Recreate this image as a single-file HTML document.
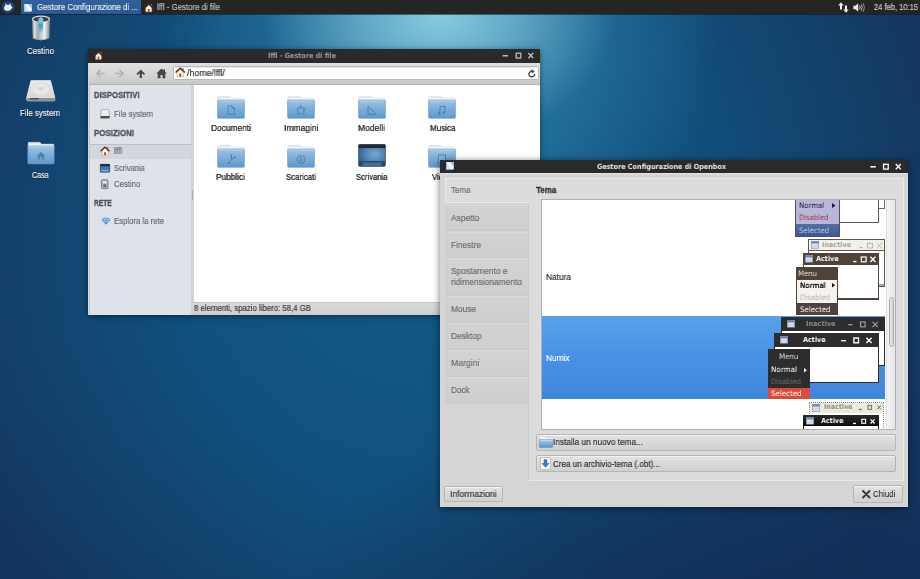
<!DOCTYPE html>
<html lang="it">
<head>
<meta charset="utf-8">
<title>Desktop</title>
<style>
*{box-sizing:border-box;margin:0;padding:0}
html,body{width:920px;height:579px;overflow:hidden}
body{position:relative;font-family:"Liberation Sans","DejaVu Sans",sans-serif;font-size:9px;color:#333;background:#123c66}
.a{position:absolute}
.t{position:absolute;white-space:nowrap;line-height:1;transform-origin:0 0;display:block;will-change:transform}
svg{position:absolute;overflow:visible}
</style>
</head>
<body>
<div class="a" id="wall" style="left:0;top:0;width:920px;height:579px;background:
radial-gradient(ellipse 175px 130px at 440px 14px, rgba(140,205,225,.95) 0%, rgba(140,205,225,0) 100%),
radial-gradient(ellipse 280px 270px at 440px 26px, rgba(60,150,190,.8) 0%, rgba(60,150,190,0) 100%),
radial-gradient(ellipse 460px 300px at 740px 660px, rgba(17,46,86,.95) 0%, rgba(17,46,86,.6) 50%, rgba(17,46,86,0) 100%),
radial-gradient(ellipse 520px 600px at 430px 200px, rgba(16,92,138,1) 0%, rgba(16,90,136,.72) 50%, rgba(16,80,128,0) 100%),
linear-gradient(180deg,#14355d 0%,#143862 60%,#13345e 100%);"></div>
<div class="a" style="left:0px;top:0px;width:920px;height:14px;background:#252525;"></div>
<div class="a" style="left:0px;top:14px;width:920px;height:1px;background:rgba(10,20,35,.55);"></div>
<svg style="left:1.6px;top:1.3px" width="12" height="12" viewBox="0 0 12 12" ><circle cx="6" cy="6" r="5.800" fill="#1a4590"/><circle cx="6" cy="6" r="5.800" fill="none" stroke="#2a5db0" stroke-width=".5" opacity=".6"/>
<path d="M2.200 8.600 Q1.700 5.600 3.400 4.600 L3.600 2.600 L5 4 Q6 3.700 6.800 4 L8.600 2.400 L8.800 4.400 L10.600 6.600 Q9.600 7.200 9 8.200 Q7.600 9.900 4.600 9.700 Q2.800 9.500 2.200 8.600 Z" fill="#f3f7fc"/>
<path d="M8.600 2.400 L8.800 4.400 L7.600 3.600 Z M3.600 2.600 L5 4 L3.500 4.400 Z" fill="#a9cdf5"/></svg>
<div class="a" style="left:21px;top:0px;width:120px;height:14px;background:linear-gradient(180deg,#30619b 0%,#2a5a92 100%);"></div>
<svg style="left:24px;top:3.7px" width="8.2" height="7.5" viewBox="0 0 9 9" ><rect x=".3" y=".3" width="8.400" height="8.400" fill="#c4e4fa" stroke="#e4f1fb" stroke-width=".6"/><path d="M.6 .6 H5 L8.400 5 V8.400 H5 Z" fill="#f2f9ff" opacity=".9"/><path d="M8.400 .6 H5.200 L8.400 4.400 Z" fill="#7db7d6"/></svg>
<span class="t" style="left:37.00px;top:3px;font-size:9px;color:#ececec;transform:scaleX(0.8817);-webkit-text-stroke:.18px;">Gestore Configurazione di ...</span>
<svg style="left:144px;top:2.5px" width="9.5" height="9.5" viewBox="0 0 16 16" ><path d="M3 7.600 V14.800 H13 V7.600 L8 3.200 Z" fill="#fdeedd" stroke="#e39a6c" stroke-width="1"/>
<rect x="6.700" y="10" width="2.600" height="4.600" fill="#7a4a2c"/>
<path d="M.9 8.400 L8 1.800 L15.100 8.400" fill="none" stroke="#4a2a1e" stroke-width="2" stroke-linejoin="miter"/>
<rect x="11.300" y="1.600" width="1.800" height="3.200" fill="#b5532f"/></svg>
<span class="t" style="left:157.00px;top:3px;font-size:9px;color:#bdbdbd;transform:scaleX(0.8707);-webkit-text-stroke:.18px;">lffl - Gestore di file</span>
<svg style="left:838px;top:2px" width="11" height="11" viewBox="0 0 11 11" ><path d="M3 .3 L5.800 3.600 H4 V7.600 H2 V3.600 H.2 Z" fill="#f2f2f2"/><path d="M8 10.700 L10.800 7.400 H9 V3.400 H7 V7.400 H5.200 Z" fill="#f2f2f2"/></svg>
<svg style="left:853px;top:2px" width="13" height="11" viewBox="0 0 13 11" ><path d="M.3 3.800 H2.400 L5.200 1.200 V9.800 L2.400 7.200 H.3 Z" fill="#e8e8e8"/>
<path d="M6.600 3.600 Q7.600 5.500 6.600 7.400" stroke="#e0e0e0" stroke-width="1" fill="none"/>
<path d="M8.300 2.300 Q10 5.500 8.300 8.700" stroke="#bdbdbd" stroke-width="1" fill="none"/>
<path d="M10.200 1.200 Q12.600 5.500 10.200 9.800" stroke="#8f8f8f" stroke-width="1" fill="none"/></svg>
<span class="t" style="left:874.00px;top:3px;font-size:9px;color:#c9c9c9;transform:scaleX(0.8375);-webkit-text-stroke:.18px;">24 feb, 10:15</span>
<svg style="left:30.5px;top:15px" width="20" height="26.5" viewBox="0 0 20 27" ><defs><linearGradient id="g1" x1="0" y1="0" x2="1" y2="0"><stop offset="0" stop-color="#70767c"/><stop offset=".14" stop-color="#d9dde0"/><stop offset=".32" stop-color="#a4a9ae"/><stop offset=".48" stop-color="#c3c7cb"/><stop offset=".7" stop-color="#f0f2f3"/><stop offset=".86" stop-color="#b1b6bb"/><stop offset="1" stop-color="#777d83"/></linearGradient>
<linearGradient id="g2" x1="0" y1="0" x2="0" y2="1"><stop offset="0" stop-color="#8fd0ea"/><stop offset=".4" stop-color="#3f9cc8"/><stop offset="1" stop-color="#3a86b0" stop-opacity=".25"/></linearGradient></defs>
<path d="M.8 4 L1.500 23.600 Q10 28 18.500 23.600 L19.200 4 Z" fill="url(#g1)"/>
<path d="M1.500 23 Q10 27.400 18.500 23" fill="none" stroke="#8c9197" stroke-width=".8" opacity=".7"/>
<ellipse cx="10" cy="4" rx="9.200" ry="3.400" fill="#d3d7da"/>
<ellipse cx="10" cy="4.300" rx="7.800" ry="2.500" fill="#3b4046"/>
<path d="M7.400 5.600 L7.800 17 L11.800 17 L12.200 5.600 Q10 6.800 7.400 5.600 Z" fill="url(#g2)"/>
<path d="M7.200 4 L9.800 1.900 L12.300 3.800 L12.200 6.200 Q10 7 7.400 6.200 Z" fill="#7cc4e4"/></svg>
<span class="t" style="left:27.00px;top:47px;font-size:9px;color:#f2f2f2;transform:scaleX(0.8848);-webkit-text-stroke:.18px;text-shadow:0 1px 1px rgba(0,0,0,.55);">Cestino</span>
<svg style="left:26px;top:80.4px" width="29.5" height="21.5" viewBox="0 0 30 22" ><defs><linearGradient id="g3" x1="0" y1="0" x2="0" y2="1"><stop offset="0" stop-color="#e9ebeb"/><stop offset="1" stop-color="#cfd2d3"/></linearGradient></defs>
<path d="M5 .6 H25 L29.400 18 V20 Q29.400 21.400 28 21.400 H2 Q.6 21.400 .6 20 V18 Z" fill="url(#g3)" stroke="#f1f2f2" stroke-width=".7"/>
<path d="M.6 18 H29.400 V20 Q29.400 21.400 28 21.400 H2 Q.6 21.400 .6 20 Z" fill="#8d9195"/>
<path d="M4 19.200 H13" stroke="#2e3236" stroke-width="1"/>
<path d="M.8 17.800 H29.200" stroke="#f7f8f8" stroke-width=".7"/>
<ellipse cx="15" cy="9.400" rx="9.400" ry="6.600" fill="#e8e6e6" stroke="#d2d3d4" stroke-width=".6"/>
<ellipse cx="15" cy="9" rx="2.600" ry="1.500" fill="#dccfd4"/></svg>
<span class="t" style="left:20.30px;top:109px;font-size:9px;color:#f2f2f2;transform:scaleX(0.8791);-webkit-text-stroke:.18px;text-shadow:0 1px 1px rgba(0,0,0,.55);">File system</span>
<svg style="left:26.5px;top:142px" width="28" height="22.5" viewBox="0 0 28 23" ><defs><linearGradient id="g4" x1="0" y1="0" x2="0" y2="1"><stop offset="0" stop-color="#9fc4e4"/><stop offset=".45" stop-color="#7fafd9"/><stop offset="1" stop-color="#5f98cb"/></linearGradient></defs>
<path d="M.8 1.300 Q.8 .3 1.800 .3 L12.400 .3 Q13.300 .3 13.700 1 L14.400 2.200 L26.400 2.200 Q27.200 2.200 27.200 3 L27.200 6 L.8 6 Z" fill="#e6ebf0" stroke="#cdd5de" stroke-width=".5"/>
<rect x="1.400" y="2.600" width="25.200" height="2" fill="#f7f9fb"/>
<rect x=".5" y="4.100" width="27" height="18.400" rx="1" fill="url(#g4)" stroke="#5a8fc3" stroke-width=".6"/>
<rect x="1" y="4.600" width="26" height=".9" fill="#c3dbf0" opacity=".85"/>
<path d="M14 10.2 l-4.6 4 h1.4 v3.6 h2.2 v-2.4 h2 v2.4 h2.2 v-3.6 h1.4 z" fill="#4e82b6"/></svg>
<span class="t" style="left:32.05px;top:171px;font-size:9px;color:#f2f2f2;transform:scaleX(0.7854);-webkit-text-stroke:.18px;text-shadow:0 1px 1px rgba(0,0,0,.55);">Casa</span>
<div class="a" style="left:88px;top:49px;width:452px;height:265.7px;background:#d6d6d6;box-shadow:0 1px 6px rgba(0,0,0,.5);"></div>
<div class="a" style="left:88px;top:49px;width:452px;height:13.5px;background:#2a2a2a;"></div>
<svg style="left:93.5px;top:51px" width="9" height="9" viewBox="0 0 16 16" ><path d="M3 7.600 V14.800 H13 V7.600 L8 3.200 Z" fill="#fdeedd" stroke="#e39a6c" stroke-width="1"/>
<rect x="6.700" y="10" width="2.600" height="4.600" fill="#7a4a2c"/>
<path d="M.9 8.400 L8 1.800 L15.100 8.400" fill="none" stroke="#4a2a1e" stroke-width="2" stroke-linejoin="miter"/>
<rect x="11.300" y="1.600" width="1.800" height="3.200" fill="#b5532f"/></svg>
<span class="t" style="left:267.80px;top:52px;font-size:7.2px;color:#9a9a9a;transform:scaleX(0.9006);font-weight:bold;font-family:'DejaVu Sans','Liberation Sans',sans-serif;">lffl - Gestore di file</span>
<svg style="left:502px;top:52px" width="32" height="8" viewBox="0 0 32 8" ><rect x=".6" y="3" width="5.400" height="1.500" fill="#bdbdbd"/>
<rect x="14.200" y="1.200" width="4.600" height="4.800" fill="none" stroke="#bdbdbd" stroke-width="1.300"/>
<path d="M26.400 1 L31.200 6.200 M31.200 1 L26.400 6.200" stroke="#bdbdbd" stroke-width="1.400"/></svg>
<div class="a" style="left:89px;top:62.5px;width:451px;height:22.5px;background:linear-gradient(180deg,#e0e0e0 0%,#d6d6d6 55%,#c6c6c6 100%);"></div>
<div class="a" style="left:89px;top:84px;width:451px;height:1px;background:#b4b4b4;"></div>
<svg style="left:95.5px;top:69px" width="9" height="9" viewBox="0 0 9 9" ><path d="M4.600 .8 L.9 4.500 L4.600 8.200 M1.200 4.500 H8.600" fill="none" stroke="#b4b4b4" stroke-width="1.700"/></svg>
<svg style="left:115px;top:69px" width="9" height="9" viewBox="0 0 9 9" ><path d="M4.400 .8 L8.100 4.500 L4.400 8.200 M7.800 4.500 H.4" fill="none" stroke="#b4b4b4" stroke-width="1.700"/></svg>
<svg style="left:135.8px;top:69px" width="9.6" height="9.5" viewBox="0 0 10 10" ><path d="M.3 5.200 L5 .4 L9.700 5.200 L8.300 6.400 L6.200 4.400 V9.600 H3.800 V4.400 L1.700 6.400 Z" fill="#4a4a4a"/></svg>
<svg style="left:155.5px;top:68px" width="11" height="10.5" viewBox="0 0 11 10.5" ><path d="M5.500 .4 L.2 5.400 H1.700 V10.200 H4.500 V7 H6.500 V10.200 H9.300 V5.400 H10.800 L9 3.700 V1.200 H7.600 V2.400 Z" fill="#474747"/></svg>
<div class="a" style="left:172.5px;top:65.5px;width:366px;height:14.5px;background:#ffffff;border:1px solid #b9b9b9;border-radius:1.5px;box-shadow:inset 0 1px 1px rgba(0,0,0,.10);"></div>
<svg style="left:174.5px;top:67.2px" width="10.5" height="10.5" viewBox="0 0 16 16" ><path d="M3 7.600 V14.800 H13 V7.600 L8 3.200 Z" fill="#fdeedd" stroke="#e39a6c" stroke-width="1"/>
<rect x="6.700" y="10" width="2.600" height="4.600" fill="#7a4a2c"/>
<path d="M.9 8.400 L8 1.800 L15.100 8.400" fill="none" stroke="#4a2a1e" stroke-width="2" stroke-linejoin="miter"/>
<rect x="11.300" y="1.600" width="1.800" height="3.200" fill="#b5532f"/></svg>
<span class="t" style="left:187.00px;top:69px;font-size:9px;color:#2e2e2e;transform:scaleX(0.9781);-webkit-text-stroke:.18px;">/home/lffl/</span>
<svg style="left:527.5px;top:68.5px" width="8" height="9" viewBox="0 0 8 9" ><path d="M6.700 5 A2.900 2.900 0 1 1 4 2.200" fill="none" stroke="#454545" stroke-width="1.400"/><path d="M3.600 .2 L6.600 2.300 L3.600 4.400 Z" fill="#454545"/></svg>
<div class="a" style="left:89px;top:85px;width:101.5px;height:229.7px;background:#dee2e9;"></div>
<div class="a" style="left:89px;top:85px;width:1px;height:229.5px;background:#c3c8d0;"></div>
<div class="a" style="left:190.5px;top:85px;width:3.2px;height:216.5px;background:#d0d3d8;"></div>
<div class="a" style="left:191.5px;top:190px;width:1px;height:10px;background:#a9acb2;"></div>
<div class="a" style="left:90px;top:143.5px;width:100.5px;height:15px;background:#d2d6de;"></div>
<div class="a" style="left:90px;top:143.5px;width:100.5px;height:1px;background:#b9bec8;"></div>
<span class="t" style="left:94.00px;top:91px;font-size:9px;color:#4d5158;transform:scaleX(0.8583);font-weight:bold;-webkit-text-stroke:.3px;">DISPOSITIVI</span>
<span class="t" style="left:94.00px;top:129px;font-size:9px;color:#4d5158;transform:scaleX(0.8790);font-weight:bold;-webkit-text-stroke:.3px;">POSIZIONI</span>
<span class="t" style="left:94.00px;top:199px;font-size:9px;color:#4d5158;transform:scaleX(0.7374);font-weight:bold;-webkit-text-stroke:.3px;">RETE</span>
<span class="t" style="left:113.70px;top:110px;font-size:9px;color:#666a71;transform:scaleX(0.8571);-webkit-text-stroke:.18px;">File system</span>
<span class="t" style="left:113.70px;top:147px;font-size:9px;color:#666a71;transform:scaleX(0.9279);-webkit-text-stroke:.18px;">lffl</span>
<span class="t" style="left:113.70px;top:164px;font-size:9px;color:#666a71;transform:scaleX(0.8240);-webkit-text-stroke:.18px;">Scrivania</span>
<span class="t" style="left:113.70px;top:180px;font-size:9px;color:#666a71;transform:scaleX(0.8619);-webkit-text-stroke:.18px;">Cestino</span>
<span class="t" style="left:113.70px;top:217px;font-size:9px;color:#666a71;transform:scaleX(0.8617);-webkit-text-stroke:.18px;">Esplora la rete</span>
<svg style="left:100px;top:109px" width="10" height="10" viewBox="0 0 10 10" ><path d="M1.500 .6 H8.500 L9.600 7 V8.600 Q9.600 9.400 8.800 9.400 H1.200 Q.4 9.400 .4 8.600 V7 Z" fill="#eeeeee" stroke="#8f9396" stroke-width=".6"/><path d="M.5 7 H9.500 V8.700 Q9.500 9.300 8.900 9.300 H1.100 Q.5 9.300 .5 8.700 Z" fill="#4c4f52"/></svg>
<svg style="left:100px;top:146.2px" width="10" height="10" viewBox="0 0 16 16" ><path d="M3 7.600 V14.800 H13 V7.600 L8 3.200 Z" fill="#fdeedd" stroke="#e39a6c" stroke-width="1"/>
<rect x="6.700" y="10" width="2.600" height="4.600" fill="#7a4a2c"/>
<path d="M.9 8.400 L8 1.800 L15.100 8.400" fill="none" stroke="#4a2a1e" stroke-width="2" stroke-linejoin="miter"/>
<rect x="11.300" y="1.600" width="1.800" height="3.200" fill="#b5532f"/></svg>
<svg style="left:100px;top:163.5px" width="10" height="8.5" viewBox="0 0 10 8.500" ><rect x=".3" y=".3" width="9.400" height="7.900" rx=".6" fill="#3e78b4" stroke="#1e2c3c" stroke-width=".6"/><rect x=".3" y=".3" width="9.400" height="1.900" fill="#1c2530"/><rect x="1.500" y="5.800" width="7" height="1.700" fill="#7aa6d2"/></svg>
<svg style="left:101.3px;top:179px" width="7.4" height="10" viewBox="0 0 7.400 10" ><rect x=".4" y=".8" width="6.600" height="8.800" rx=".8" fill="#a9aeb3" stroke="#63686e" stroke-width=".7"/><rect x="1.700" y="2.200" width="4" height="2.200" fill="#e8ebee"/><rect x="2.400" y="5.400" width="2.600" height="2.400" fill="#5d6369"/></svg>
<svg style="left:100.5px;top:217px" width="10" height="8" viewBox="0 0 10 8" ><path d="M5 7.800 L.2 2.700 Q5 -1.800 9.800 2.700 Z" fill="#4f9ad6"/><path d="M1.500 3.200 Q5 .2 8.500 3.200 M2.900 4.700 Q5 3 7.100 4.700" stroke="#cfe6f7" stroke-width=".8" fill="none"/></svg>
<div class="a" style="left:193.7px;top:85px;width:346.3px;height:216.5px;background:#ffffff;"></div>
<div class="a" style="left:190.5px;top:301.5px;width:349.5px;height:13.2px;background:linear-gradient(180deg,#d9d9d9,#cfcfcf);"></div>
<div class="a" style="left:190.5px;top:301.5px;width:349.5px;height:1px;background:#c6c6c6;"></div>
<span class="t" style="left:194.30px;top:304px;font-size:9px;color:#3b3b3b;transform:scaleX(0.8662);-webkit-text-stroke:.18px;">8 elementi, spazio libero: 58,4 GB</span>
<svg style="left:216.5px;top:95.8px" width="28" height="22.8" viewBox="0 0 28 23" ><defs><linearGradient id="g5" x1="0" y1="0" x2="0" y2="1"><stop offset="0" stop-color="#9fc4e4"/><stop offset=".45" stop-color="#7fafd9"/><stop offset="1" stop-color="#5f98cb"/></linearGradient></defs>
<path d="M.8 1.300 Q.8 .3 1.800 .3 L12.400 .3 Q13.300 .3 13.700 1 L14.400 2.200 L26.400 2.200 Q27.200 2.200 27.200 3 L27.200 6 L.8 6 Z" fill="#e6ebf0" stroke="#cdd5de" stroke-width=".5"/>
<rect x="1.400" y="2.600" width="25.200" height="2" fill="#f7f9fb"/>
<rect x=".5" y="4.100" width="27" height="18.400" rx="1" fill="url(#g5)" stroke="#5a8fc3" stroke-width=".6"/>
<rect x="1" y="4.600" width="26" height=".9" fill="#c3dbf0" opacity=".85"/>
<path d="M11 10 h4 l2.5 2.5 v6 h-6.5 z M15 10 v2.5 h2.5" fill="none" stroke="#4a7fb5" stroke-width=".9"/></svg>
<span class="t" style="left:210.50px;top:124px;font-size:9px;color:#2f2f2f;transform:scaleX(0.9299);-webkit-text-stroke:.18px;text-shadow:0 0 .4px rgba(0,0,0,.6);">Documenti</span>
<svg style="left:287.2px;top:95.8px" width="28" height="22.8" viewBox="0 0 28 23" ><defs><linearGradient id="g6" x1="0" y1="0" x2="0" y2="1"><stop offset="0" stop-color="#9fc4e4"/><stop offset=".45" stop-color="#7fafd9"/><stop offset="1" stop-color="#5f98cb"/></linearGradient></defs>
<path d="M.8 1.300 Q.8 .3 1.800 .3 L12.400 .3 Q13.300 .3 13.700 1 L14.400 2.200 L26.400 2.200 Q27.200 2.200 27.200 3 L27.200 6 L.8 6 Z" fill="#e6ebf0" stroke="#cdd5de" stroke-width=".5"/>
<rect x="1.400" y="2.600" width="25.200" height="2" fill="#f7f9fb"/>
<rect x=".5" y="4.100" width="27" height="18.400" rx="1" fill="url(#g6)" stroke="#5a8fc3" stroke-width=".6"/>
<rect x="1" y="4.600" width="26" height=".9" fill="#c3dbf0" opacity=".85"/>
<path d="M10.5 12 h6.5 v6 h-6.5 z M13 12 v-2 h2 M17 13 h1.5" fill="none" stroke="#4a7fb5" stroke-width="1"/></svg>
<span class="t" style="left:283.95px;top:124px;font-size:9px;color:#2f2f2f;transform:scaleX(0.9450);-webkit-text-stroke:.18px;text-shadow:0 0 .4px rgba(0,0,0,.6);">Immagini</span>
<svg style="left:357.8px;top:95.8px" width="28" height="22.8" viewBox="0 0 28 23" ><defs><linearGradient id="g7" x1="0" y1="0" x2="0" y2="1"><stop offset="0" stop-color="#9fc4e4"/><stop offset=".45" stop-color="#7fafd9"/><stop offset="1" stop-color="#5f98cb"/></linearGradient></defs>
<path d="M.8 1.300 Q.8 .3 1.800 .3 L12.400 .3 Q13.300 .3 13.700 1 L14.400 2.200 L26.400 2.200 Q27.200 2.200 27.200 3 L27.200 6 L.8 6 Z" fill="#e6ebf0" stroke="#cdd5de" stroke-width=".5"/>
<rect x="1.400" y="2.600" width="25.200" height="2" fill="#f7f9fb"/>
<rect x=".5" y="4.100" width="27" height="18.400" rx="1" fill="url(#g7)" stroke="#5a8fc3" stroke-width=".6"/>
<rect x="1" y="4.600" width="26" height=".9" fill="#c3dbf0" opacity=".85"/>
<path d="M10 18.5 v-8 l8.5 8 z" fill="none" stroke="#4a7fb5" stroke-width="1"/></svg>
<span class="t" style="left:358.30px;top:124px;font-size:9px;color:#2f2f2f;transform:scaleX(0.9470);-webkit-text-stroke:.18px;text-shadow:0 0 .4px rgba(0,0,0,.6);">Modelli</span>
<svg style="left:428.4px;top:95.8px" width="28" height="22.8" viewBox="0 0 28 23" ><defs><linearGradient id="g8" x1="0" y1="0" x2="0" y2="1"><stop offset="0" stop-color="#9fc4e4"/><stop offset=".45" stop-color="#7fafd9"/><stop offset="1" stop-color="#5f98cb"/></linearGradient></defs>
<path d="M.8 1.300 Q.8 .3 1.800 .3 L12.400 .3 Q13.300 .3 13.700 1 L14.400 2.200 L26.400 2.200 Q27.200 2.200 27.200 3 L27.200 6 L.8 6 Z" fill="#e6ebf0" stroke="#cdd5de" stroke-width=".5"/>
<rect x="1.400" y="2.600" width="25.200" height="2" fill="#f7f9fb"/>
<rect x=".5" y="4.100" width="27" height="18.400" rx="1" fill="url(#g8)" stroke="#5a8fc3" stroke-width=".6"/>
<rect x="1" y="4.600" width="26" height=".9" fill="#c3dbf0" opacity=".85"/>
<path d="M12 17.5 v-6.5 l5 -1 v6.5" fill="none" stroke="#4a7fb5" stroke-width="1"/><circle cx="11" cy="17.6" r="1.2" fill="#4a7fb5"/><circle cx="16" cy="16.6" r="1.2" fill="#4a7fb5"/></svg>
<span class="t" style="left:429.65px;top:124px;font-size:9px;color:#2f2f2f;transform:scaleX(0.8945);-webkit-text-stroke:.18px;text-shadow:0 0 .4px rgba(0,0,0,.6);">Musica</span>
<svg style="left:216.5px;top:144.5px" width="28" height="22.8" viewBox="0 0 28 23" ><defs><linearGradient id="g9" x1="0" y1="0" x2="0" y2="1"><stop offset="0" stop-color="#9fc4e4"/><stop offset=".45" stop-color="#7fafd9"/><stop offset="1" stop-color="#5f98cb"/></linearGradient></defs>
<path d="M.8 1.300 Q.8 .3 1.800 .3 L12.400 .3 Q13.300 .3 13.700 1 L14.400 2.200 L26.400 2.200 Q27.200 2.200 27.200 3 L27.200 6 L.8 6 Z" fill="#e6ebf0" stroke="#cdd5de" stroke-width=".5"/>
<rect x="1.400" y="2.600" width="25.200" height="2" fill="#f7f9fb"/>
<rect x=".5" y="4.100" width="27" height="18.400" rx="1" fill="url(#g9)" stroke="#5a8fc3" stroke-width=".6"/>
<rect x="1" y="4.600" width="26" height=".9" fill="#c3dbf0" opacity=".85"/>
<path d="M12 18 l2.5 -3.5 v-4 M14.5 14.5 l3.5 -2" fill="none" stroke="#4a7fb5" stroke-width="1"/><circle cx="11.7" cy="18.2" r="1.1" fill="#4a7fb5"/><circle cx="14.5" cy="10.3" r="1" fill="#4a7fb5"/><circle cx="18.2" cy="12.3" r="1" fill="#4a7fb5"/></svg>
<span class="t" style="left:216.00px;top:173px;font-size:9px;color:#2f2f2f;transform:scaleX(0.9201);-webkit-text-stroke:.18px;text-shadow:0 0 .4px rgba(0,0,0,.6);">Pubblici</span>
<svg style="left:287.2px;top:144.5px" width="28" height="22.8" viewBox="0 0 28 23" ><defs><linearGradient id="g10" x1="0" y1="0" x2="0" y2="1"><stop offset="0" stop-color="#9fc4e4"/><stop offset=".45" stop-color="#7fafd9"/><stop offset="1" stop-color="#5f98cb"/></linearGradient></defs>
<path d="M.8 1.300 Q.8 .3 1.800 .3 L12.400 .3 Q13.300 .3 13.700 1 L14.400 2.200 L26.400 2.200 Q27.200 2.200 27.200 3 L27.200 6 L.8 6 Z" fill="#e6ebf0" stroke="#cdd5de" stroke-width=".5"/>
<rect x="1.400" y="2.600" width="25.200" height="2" fill="#f7f9fb"/>
<rect x=".5" y="4.100" width="27" height="18.400" rx="1" fill="url(#g10)" stroke="#5a8fc3" stroke-width=".6"/>
<rect x="1" y="4.600" width="26" height=".9" fill="#c3dbf0" opacity=".85"/>
<circle cx="14" cy="14.5" r="4" fill="none" stroke="#4a7fb5" stroke-width=".9"/><path d="M14 12 v4 M12.3 14.8 l1.7 1.7 l1.7 -1.7" fill="none" stroke="#4a7fb5" stroke-width="1"/></svg>
<span class="t" style="left:286.20px;top:173px;font-size:9px;color:#2f2f2f;transform:scaleX(0.8693);-webkit-text-stroke:.18px;text-shadow:0 0 .4px rgba(0,0,0,.6);">Scaricati</span>
<svg style="left:357.8px;top:144.3px" width="28" height="22.8" viewBox="0 0 28 23" ><defs><radialGradient id="g11" cx=".6" cy=".45" r=".7"><stop offset="0" stop-color="#7aaad2"/><stop offset="1" stop-color="#2c5a8c"/></radialGradient></defs>
<rect x=".5" y=".5" width="27" height="22" rx="1.2" fill="url(#g11)" stroke="#23405f" stroke-width=".7"/>
<path d="M.5 1.7 Q.5 .5 1.7 .5 H26.3 Q27.5 .5 27.5 1.7 V4 H.5 Z" fill="#1f2a36"/>
<rect x="1" y="17.2" width="26" height="5.300" fill="#26466c"/>
<rect x="4.500" y="18.600" width="19" height="3.600" fill="#4a78a8" opacity=".8"/></svg>
<span class="t" style="left:356.05px;top:173px;font-size:9px;color:#2f2f2f;transform:scaleX(0.8510);-webkit-text-stroke:.18px;text-shadow:0 0 .4px rgba(0,0,0,.6);">Scrivania</span>
<svg style="left:428.4px;top:144.5px" width="28" height="22.8" viewBox="0 0 28 23" ><defs><linearGradient id="g12" x1="0" y1="0" x2="0" y2="1"><stop offset="0" stop-color="#9fc4e4"/><stop offset=".45" stop-color="#7fafd9"/><stop offset="1" stop-color="#5f98cb"/></linearGradient></defs>
<path d="M.8 1.300 Q.8 .3 1.800 .3 L12.400 .3 Q13.300 .3 13.700 1 L14.400 2.200 L26.400 2.200 Q27.200 2.200 27.200 3 L27.200 6 L.8 6 Z" fill="#e6ebf0" stroke="#cdd5de" stroke-width=".5"/>
<rect x="1.400" y="2.600" width="25.200" height="2" fill="#f7f9fb"/>
<rect x=".5" y="4.100" width="27" height="18.400" rx="1" fill="url(#g12)" stroke="#5a8fc3" stroke-width=".6"/>
<rect x="1" y="4.600" width="26" height=".9" fill="#c3dbf0" opacity=".85"/>
<rect x="10.5" y="10" width="7" height="8.5" fill="#8fb6dc" stroke="#4a7fb5" stroke-width=".9"/></svg>
<span class="t" style="left:432.40px;top:173px;font-size:9px;color:#2f2f2f;transform:scaleX(0.8751);-webkit-text-stroke:.18px;text-shadow:0 0 .4px rgba(0,0,0,.6);">Video</span>
<div class="a" style="left:440px;top:159.5px;width:467.6px;height:347.6px;background:#d5d5d5;box-shadow:0 1px 7px rgba(0,0,0,.55);"></div>
<div class="a" style="left:440px;top:159.5px;width:467.6px;height:13.8px;background:#2a2a2a;"></div>
<svg style="left:446.2px;top:162.4px" width="8" height="7.6" viewBox="0 0 9 9" ><rect x=".3" y=".3" width="8.400" height="8.400" fill="#c4e4fa" stroke="#e4f1fb" stroke-width=".6"/><path d="M.6 .6 H5 L8.400 5 V8.400 H5 Z" fill="#f2f9ff" opacity=".9"/><path d="M8.400 .6 H5.200 L8.400 4.400 Z" fill="#7db7d6"/></svg>
<span class="t" style="left:596.90px;top:163px;font-size:7.2px;color:#e8e8e8;transform:scaleX(0.8968);font-weight:bold;font-family:'DejaVu Sans','Liberation Sans',sans-serif;">Gestore Configurazione di Openbox</span>
<svg style="left:870px;top:163px" width="32" height="8" viewBox="0 0 32 8" ><rect x=".4" y="3" width="5.400" height="1.600" fill="#f4f4f4"/>
<rect x="13.600" y="1.300" width="4.600" height="4.800" fill="none" stroke="#f4f4f4" stroke-width="1.400"/>
<path d="M25.800 1 L30.800 6.300 M30.800 1 L25.800 6.300" stroke="#f4f4f4" stroke-width="1.500"/></svg>
<div class="a" style="left:440.5px;top:173.3px;width:466.6px;height:1px;background:#e4e4e4;"></div>
<div class="a" style="left:527.5px;top:177.5px;width:376.5px;height:303px;background:#dcdcdc;border:1px solid #e9e9e9;border-left-color:#c9c9c9;"></div>
<div class="a" style="left:444.5px;top:178px;width:84px;height:24.5px;background:#dcdcdc;border:1px solid #e9e9e9;border-right:none;"></div>
<div class="a" style="left:445.5px;top:204.5px;width:82px;height:26.5px;background:linear-gradient(180deg,#d3d3d3,#cecece);border:1px solid #cacaca;border-right:none;border-top-color:#d9d9d9;"></div>
<div class="a" style="left:445.5px;top:231.5px;width:82px;height:26.5px;background:linear-gradient(180deg,#d3d3d3,#cecece);border:1px solid #cacaca;border-right:none;border-top-color:#d9d9d9;"></div>
<div class="a" style="left:445.5px;top:258.5px;width:82px;height:37px;background:linear-gradient(180deg,#d3d3d3,#cecece);border:1px solid #cacaca;border-right:none;border-top-color:#d9d9d9;"></div>
<div class="a" style="left:445.5px;top:296px;width:82px;height:26.5px;background:linear-gradient(180deg,#d3d3d3,#cecece);border:1px solid #cacaca;border-right:none;border-top-color:#d9d9d9;"></div>
<div class="a" style="left:445.5px;top:323px;width:82px;height:26.5px;background:linear-gradient(180deg,#d3d3d3,#cecece);border:1px solid #cacaca;border-right:none;border-top-color:#d9d9d9;"></div>
<div class="a" style="left:445.5px;top:350px;width:82px;height:26.5px;background:linear-gradient(180deg,#d3d3d3,#cecece);border:1px solid #cacaca;border-right:none;border-top-color:#d9d9d9;"></div>
<div class="a" style="left:445.5px;top:377px;width:82px;height:26.5px;background:linear-gradient(180deg,#d3d3d3,#cecece);border:1px solid #cacaca;border-right:none;border-top-color:#d9d9d9;"></div>
<span class="t" style="left:451.00px;top:186px;font-size:9px;color:#6c6c6c;transform:scaleX(0.8861);-webkit-text-stroke:.18px;">Tema</span>
<span class="t" style="left:451.00px;top:214px;font-size:9px;color:#6c6c6c;transform:scaleX(0.9339);-webkit-text-stroke:.18px;">Aspetto</span>
<span class="t" style="left:451.00px;top:241px;font-size:9px;color:#6c6c6c;transform:scaleX(0.9228);-webkit-text-stroke:.18px;">Finestre</span>
<span class="t" style="left:451.00px;top:267px;font-size:9px;color:#6c6c6c;transform:scaleX(0.9333);-webkit-text-stroke:.18px;">Spostamento e</span>
<span class="t" style="left:451.00px;top:278px;font-size:9px;color:#6c6c6c;transform:scaleX(0.9338);-webkit-text-stroke:.18px;">ridimensionamento</span>
<span class="t" style="left:451.00px;top:305px;font-size:9px;color:#6c6c6c;transform:scaleX(0.9255);-webkit-text-stroke:.18px;">Mouse</span>
<span class="t" style="left:451.00px;top:332px;font-size:9px;color:#6c6c6c;transform:scaleX(0.9238);-webkit-text-stroke:.18px;">Desktop</span>
<span class="t" style="left:451.00px;top:359px;font-size:9px;color:#6c6c6c;transform:scaleX(0.9659);-webkit-text-stroke:.18px;">Margini</span>
<span class="t" style="left:451.00px;top:386px;font-size:9px;color:#6c6c6c;transform:scaleX(0.9022);-webkit-text-stroke:.18px;">Dock</span>
<span class="t" style="left:535.60px;top:186px;font-size:9px;color:#2e2e2e;transform:scaleX(0.8931);font-weight:bold;-webkit-text-stroke:.3px;">Tema</span>
<div class="a" style="left:542.3px;top:199.6px;width:353px;height:229.3px;background:#ffffff;box-shadow:0 0 0 1px rgba(0,0,0,.2);"></div>
<div class="a" style="left:542.3px;top:316.2px;width:343.2px;height:83.3px;background:linear-gradient(180deg,#5aa0ea 0%,#4a92e4 45%,#3d86dd 100%);"></div>
<span class="t" style="left:546.00px;top:273px;font-size:9px;color:#2a2a2a;transform:scaleX(0.9255);-webkit-text-stroke:.18px;">Natura</span>
<span class="t" style="left:546.00px;top:354px;font-size:9px;color:#ffffff;transform:scaleX(0.9215);-webkit-text-stroke:.18px;">Numix</span>
<div class="a" style="left:885.6px;top:199.6px;width:9.7px;height:229.3px;background:linear-gradient(90deg,#f4f4f4,#e4e4e4);border-left:1px solid #e0e0e0;"></div>
<div class="a" style="left:888.5px;top:297px;width:5.5px;height:50px;background:linear-gradient(90deg,#e6e6e6,#d2d2d2);border:1px solid #b0b0b0;border-radius:3px;"></div>
<div class="a" style="left:535.5px;top:433.5px;width:360px;height:17px;background:linear-gradient(180deg,#e3e3e3 0%,#d9d9d9 50%,#d0d0d0 100%);border:1px solid #b5b5b5;border-radius:2px;box-shadow:inset 0 1px 0 rgba(255,255,255,.6);"></div>
<div class="a" style="left:535.5px;top:455.3px;width:360px;height:17px;background:linear-gradient(180deg,#e3e3e3 0%,#d9d9d9 50%,#d0d0d0 100%);border:1px solid #b5b5b5;border-radius:2px;box-shadow:inset 0 1px 0 rgba(255,255,255,.6);"></div>
<svg style="left:538.5px;top:436.3px" width="14" height="11.7" viewBox="0 0 14 11.7" ><defs><linearGradient id="sf1" x1="0" y1="0" x2="0" y2="1"><stop offset="0" stop-color="#a9cbe8"/><stop offset="1" stop-color="#5b95ca"/></linearGradient></defs>
<path d="M.4 .9 Q.4 .3 1 .3 H5.800 L6.800 1.800 H13 Q13.600 1.800 13.600 2.400 V5 H.4 Z" fill="#f6f8fa" stroke="#b9c6d4" stroke-width=".5"/>
<rect x=".3" y="3.600" width="13.400" height="7.800" rx=".6" fill="url(#sf1)" stroke="#5488bd" stroke-width=".5"/>
<rect x=".7" y="3.900" width="12.600" height=".7" fill="#d4e6f5"/></svg>
<span class="t" style="left:552.60px;top:438px;font-size:9px;color:#2e2e2e;transform:scaleX(0.9179);-webkit-text-stroke:.18px;">Installa un nuovo tema...</span>
<svg style="left:540px;top:457.3px" width="11" height="13" viewBox="0 0 11 13" ><rect x=".4" y=".4" width="10.200" height="12.200" rx=".8" fill="#f6f6f6" stroke="#a9a9a9" stroke-width=".7"/><path d="M4 2.800 H7 V6.500 H9 L5.500 10.300 L2 6.500 H4 Z" fill="#3d79c4" stroke="#2a5ea3" stroke-width=".5"/></svg>
<span class="t" style="left:552.80px;top:460px;font-size:9px;color:#2e2e2e;transform:scaleX(0.8951);-webkit-text-stroke:.18px;">Crea un archivio-tema (.obt)...</span>
<div class="a" style="left:444.3px;top:485.5px;width:58.3px;height:16.2px;background:linear-gradient(180deg,#e3e3e3 0%,#d9d9d9 50%,#d0d0d0 100%);border:1px solid #b5b5b5;border-radius:2px;box-shadow:inset 0 1px 0 rgba(255,255,255,.6);"></div>
<span class="t" style="left:450.00px;top:490px;font-size:9px;color:#333333;transform:scaleX(0.9486);-webkit-text-stroke:.18px;">Informazioni</span>
<div class="a" style="left:852.5px;top:485.3px;width:50.7px;height:17.8px;background:linear-gradient(180deg,#e3e3e3 0%,#d9d9d9 50%,#d0d0d0 100%);border:1px solid #b5b5b5;border-radius:2px;box-shadow:inset 0 1px 0 rgba(255,255,255,.6);"></div>
<svg style="left:862.3px;top:489.5px" width="8.5" height="8.5" viewBox="0 0 8.500 8.500" ><path d="M1 1 L7.500 7.500 M7.500 1 L1 7.500" stroke="#3a3a3a" stroke-width="2" stroke-linecap="round"/></svg>
<span class="t" style="left:873.40px;top:490px;font-size:9px;color:#333333;transform:scaleX(0.8740);-webkit-text-stroke:.18px;">Chiudi</span>
<div class="a" style="left:542.5px;top:199.6px;width:343.1px;height:229.2px;overflow:hidden"><div class="a" style="left:-542.5px;top:-199.6px;width:920px;height:579px">
<div class="a" style="left:878px;top:190px;width:6.8px;height:18.5px;background:#ffffff;border:1px solid #6a6a6a;"></div>
<div class="a" style="left:839px;top:190px;width:39.7px;height:32.5px;background:#ffffff;border:1px solid #5a5a5a;"></div>
<div class="a" style="left:795.3px;top:190px;width:44.5px;height:46.5px;background:#b9b7d9;border:1px solid #4c4c70;"></div>
<div class="a" style="left:796.3px;top:224px;width:42.5px;height:11.6px;background:linear-gradient(180deg,#556ca0,#3f5a90);"></div>
<span class="t" style="left:798.80px;top:202px;font-size:7.5px;color:#16163f;transform:scaleX(0.9286);font-family:'DejaVu Sans','Liberation Sans',sans-serif;">Normal</span>
<svg style="left:832px;top:202.5px" width="3.5" height="5" viewBox="0 0 3.500 5" ><path d="M0 0 L3.500 2.500 L0 5 Z" fill="#16163f"/></svg>
<span class="t" style="left:798.80px;top:214px;font-size:7.5px;color:#9c2f4a;transform:scaleX(0.9054);font-family:'DejaVu Sans','Liberation Sans',sans-serif;">Disabled</span>
<span class="t" style="left:798.80px;top:227px;font-size:7.5px;color:#b4cbf6;transform:scaleX(0.9288);font-family:'DejaVu Sans','Liberation Sans',sans-serif;">Selected</span>
<div class="a" style="left:808.3px;top:239px;width:76.4px;height:48px;background:#ffffff;border:1px solid #5f564c;"></div>
<div class="a" style="left:809.3px;top:240px;width:74.4px;height:10.4px;background:#f1f0e9;"></div>
<div class="a" style="left:808.3px;top:250.2px;width:76.4px;height:1px;background:#5f564c;"></div>
<div class="a" style="left:809px;top:284.3px;width:75px;height:2.2px;background:#a8a8a8;"></div>
<svg style="left:811px;top:241.3px" width="8" height="7.5" viewBox="0 0 8 7.5" ><rect x=".3" y=".3" width="7.400" height="6.900" fill="#dfe6ee" stroke="#7f8ea3" stroke-width=".6"/><rect x=".3" y=".3" width="7.400" height="2.200" fill="#6f86ad"/><path d="M.6 4.200 H7.400 M.6 5.600 H7.400" stroke="#b9c4d3" stroke-width=".5"/></svg>
<span class="t" style="left:822.30px;top:242px;font-size:7px;color:#a59f95;transform:scaleX(0.9201);font-weight:bold;font-family:'DejaVu Sans','Liberation Sans',sans-serif;">Inactive</span>
<svg style="left:859px;top:242px" width="24" height="7" viewBox="0 0 24 7" ><rect x=".5" y="5" width="3" height="1.200" fill="#b6b0a6"/><rect x="8.400" y="1.200" width="5" height="4.800" fill="none" stroke="#b6b0a6" stroke-width=".9"/><path d="M17.600 1 L22.800 6.200 M22.800 1 L17.600 6.200" stroke="#b6b0a6" stroke-width=".9"/></svg>
<div class="a" style="left:802.5px;top:253px;width:76.4px;height:47px;background:#ffffff;border:1px solid #4e4239;border-bottom-width:2px;"></div>
<div class="a" style="left:802.5px;top:253px;width:76.4px;height:11.8px;background:#4e4239;"></div>
<svg style="left:805px;top:255.2px" width="8" height="7.5" viewBox="0 0 8 7.5" ><rect x=".3" y=".3" width="7.400" height="6.900" fill="#dfe6ee" stroke="#7f8ea3" stroke-width=".6"/><rect x=".3" y=".3" width="7.400" height="2.200" fill="#6f86ad"/><path d="M.6 4.200 H7.400 M.6 5.600 H7.400" stroke="#b9c4d3" stroke-width=".5"/></svg>
<span class="t" style="left:816.00px;top:256px;font-size:7px;color:#ffffff;transform:scaleX(0.9138);font-weight:bold;font-family:'DejaVu Sans','Liberation Sans',sans-serif;">Active</span>
<svg style="left:853px;top:256px" width="23" height="7" viewBox="0 0 23 7" ><rect x=".2" y="4.800" width="3.200" height="1.500" fill="#ffffff"/><rect x="8.300" y="1" width="4.800" height="4.800" fill="none" stroke="#ffffff" stroke-width="1.200"/><path d="M17.400 .8 L22.400 6 M22.400 .8 L17.400 6" stroke="#ffffff" stroke-width="1.300"/></svg>
<div class="a" style="left:796.3px;top:267px;width:42.2px;height:47.6px;background:#f6f3ef;border:1px solid #4e4239;"></div>
<div class="a" style="left:796.3px;top:267px;width:42.2px;height:12.5px;background:#4e4239;"></div>
<div class="a" style="left:796.3px;top:303.2px;width:42.2px;height:11.4px;background:#4e4239;"></div>
<span class="t" style="left:798.40px;top:270px;font-size:7.5px;color:#e4dfd8;transform:scaleX(0.9227);font-family:'DejaVu Sans','Liberation Sans',sans-serif;">Menu</span>
<span class="t" style="left:799.50px;top:282px;font-size:7.5px;color:#111111;transform:scaleX(0.9397);font-family:'DejaVu Sans','Liberation Sans',sans-serif;text-shadow:0 0 .3px #000;">Normal</span>
<svg style="left:831.8px;top:283.4px" width="3" height="4.6" viewBox="0 0 3 4.600" ><path d="M0 0 L3 2.300 L0 4.600 Z" fill="#111"/></svg>
<span class="t" style="left:799.50px;top:294px;font-size:7.5px;color:#b3afa8;transform:scaleX(0.9207);font-family:'DejaVu Sans','Liberation Sans',sans-serif;">Disabled</span>
<span class="t" style="left:799.50px;top:306px;font-size:7.5px;color:#ffffff;transform:scaleX(0.9380);font-family:'DejaVu Sans','Liberation Sans',sans-serif;">Selected</span>
<div class="a" style="left:780.7px;top:317.2px;width:104.7px;height:48.8px;background:#ffffff;border:1px solid #2d2d2d;"></div>
<div class="a" style="left:780.7px;top:317.2px;width:104.7px;height:13.5px;background:#2d2d2d;"></div>
<svg style="left:786.5px;top:320.2px" width="8" height="7.5" viewBox="0 0 8 7.5" ><rect x=".3" y=".3" width="7.400" height="6.900" fill="#dfe6ee" stroke="#7f8ea3" stroke-width=".6"/><rect x=".3" y=".3" width="7.400" height="2.200" fill="#6f86ad"/><path d="M.6 4.200 H7.400 M.6 5.600 H7.400" stroke="#b9c4d3" stroke-width=".5"/></svg>
<span class="t" style="left:805.75px;top:321px;font-size:7px;color:#8c8c8c;transform:scaleX(0.9360);font-weight:bold;font-family:'DejaVu Sans','Liberation Sans',sans-serif;">Inactive</span>
<svg style="left:848px;top:320.5px" width="31" height="7" viewBox="0 0 31 7" ><rect x=".2" y="3" width="4.400" height="1.300" fill="#9a9a9a"/><rect x="12.500" y="1" width="4.600" height="4.800" fill="none" stroke="#9a9a9a" stroke-width="1.200"/><path d="M24.600 .8 L29.800 6 M29.800 .8 L24.600 6" stroke="#9a9a9a" stroke-width="1.200"/></svg>
<div class="a" style="left:774px;top:333.3px;width:104.8px;height:49.3px;background:#ffffff;border:1px solid #2d2d2d;"></div>
<div class="a" style="left:774px;top:333.3px;width:104.8px;height:13.6px;background:#2d2d2d;"></div>
<svg style="left:780.3px;top:336.3px" width="8" height="7.5" viewBox="0 0 8 7.5" ><rect x=".3" y=".3" width="7.400" height="6.900" fill="#dfe6ee" stroke="#7f8ea3" stroke-width=".6"/><rect x=".3" y=".3" width="7.400" height="2.200" fill="#6f86ad"/><path d="M.6 4.200 H7.400 M.6 5.600 H7.400" stroke="#b9c4d3" stroke-width=".5"/></svg>
<span class="t" style="left:802.75px;top:337px;font-size:7px;color:#ffffff;transform:scaleX(0.9138);font-weight:bold;font-family:'DejaVu Sans','Liberation Sans',sans-serif;">Active</span>
<svg style="left:841.4px;top:336.7px" width="31" height="7" viewBox="0 0 31 7" ><rect x=".2" y="3" width="4.800" height="1.400" fill="#ffffff"/><rect x="12.900" y="1" width="4.600" height="4.800" fill="none" stroke="#ffffff" stroke-width="1.400"/><path d="M25.400 .8 L30.600 6 M30.600 .8 L25.400 6" stroke="#ffffff" stroke-width="1.400"/></svg>
<div class="a" style="left:768.3px;top:349.3px;width:41.5px;height:49.4px;background:#2d2d2d;"></div>
<div class="a" style="left:768.3px;top:387.6px;width:41.5px;height:11.1px;background:#dc4b39;"></div>
<span class="t" style="left:779.25px;top:353px;font-size:7.5px;color:#dcdcdc;transform:scaleX(0.9470);font-family:'DejaVu Sans','Liberation Sans',sans-serif;">Menu</span>
<span class="t" style="left:771.00px;top:366px;font-size:7.5px;color:#ffffff;transform:scaleX(0.9581);font-family:'DejaVu Sans','Liberation Sans',sans-serif;">Normal</span>
<svg style="left:803.5px;top:367.8px" width="2.8" height="4.4" viewBox="0 0 2.800 4.400" ><path d="M0 0 L2.800 2.200 L0 4.400 Z" fill="#fff"/></svg>
<span class="t" style="left:771.00px;top:378px;font-size:7.5px;color:#6c6c6c;transform:scaleX(0.9207);font-family:'DejaVu Sans','Liberation Sans',sans-serif;">Disabled</span>
<span class="t" style="left:771.00px;top:390px;font-size:7.5px;color:#ffffff;transform:scaleX(0.9380);font-family:'DejaVu Sans','Liberation Sans',sans-serif;">Selected</span>
<div class="a" style="left:809.3px;top:401.5px;width:75.2px;height:40px;background:#ffffff;border:1px dotted #8a887a;"></div>
<div class="a" style="left:810.3px;top:402.5px;width:73.2px;height:10px;background:#eceadd;"></div>
<svg style="left:812px;top:403.5px" width="8" height="7.5" viewBox="0 0 8 7.5" ><rect x=".3" y=".3" width="7.400" height="6.900" fill="#dfe6ee" stroke="#7f8ea3" stroke-width=".6"/><rect x=".3" y=".3" width="7.400" height="2.200" fill="#6f86ad"/><path d="M.6 4.200 H7.400 M.6 5.600 H7.400" stroke="#b9c4d3" stroke-width=".5"/></svg>
<span class="t" style="left:824.20px;top:404px;font-size:7px;color:#8d8b7c;transform:scaleX(0.9043);font-weight:bold;font-family:'DejaVu Sans','Liberation Sans',sans-serif;">Inactive</span>
<svg style="left:858px;top:404px" width="24" height="7" viewBox="0 0 24 7" ><rect x=".8" y="4.800" width="3" height="1.200" fill="#6f6d60"/><rect x="10" y="1.400" width="3.600" height="4" fill="none" stroke="#6f6d60" stroke-width="1"/><path d="M19.200 1.400 L23 5.400 M23 1.400 L19.200 5.400" stroke="#6f6d60" stroke-width="1"/></svg>
<div class="a" style="left:803px;top:414.9px;width:75.8px;height:30px;background:#ffffff;border:1px solid #111;"></div>
<div class="a" style="left:803px;top:414.9px;width:75.8px;height:11.1px;background:linear-gradient(180deg,#2a2a2a,#0c0c0c);"></div>
<svg style="left:806px;top:416.8px" width="8" height="7.5" viewBox="0 0 8 7.5" ><rect x=".3" y=".3" width="7.400" height="6.900" fill="#dfe6ee" stroke="#7f8ea3" stroke-width=".6"/><rect x=".3" y=".3" width="7.400" height="2.200" fill="#6f86ad"/><path d="M.6 4.200 H7.400 M.6 5.600 H7.400" stroke="#b9c4d3" stroke-width=".5"/></svg>
<span class="t" style="left:821.00px;top:418px;font-size:7px;color:#ffffff;transform:scaleX(0.9056);font-weight:bold;font-family:'DejaVu Sans','Liberation Sans',sans-serif;">Active</span>
<svg style="left:852px;top:417.5px" width="24" height="7" viewBox="0 0 24 7" ><rect x="1" y="4.800" width="3" height="1.300" fill="#fff"/><rect x="9.800" y="1.300" width="3.800" height="4" fill="none" stroke="#fff" stroke-width="1.100"/><path d="M18.600 1.300 L22.600 5.500 M22.600 1.300 L18.600 5.500" stroke="#fff" stroke-width="1.200"/></svg>
</div></div>
</body>
</html>
